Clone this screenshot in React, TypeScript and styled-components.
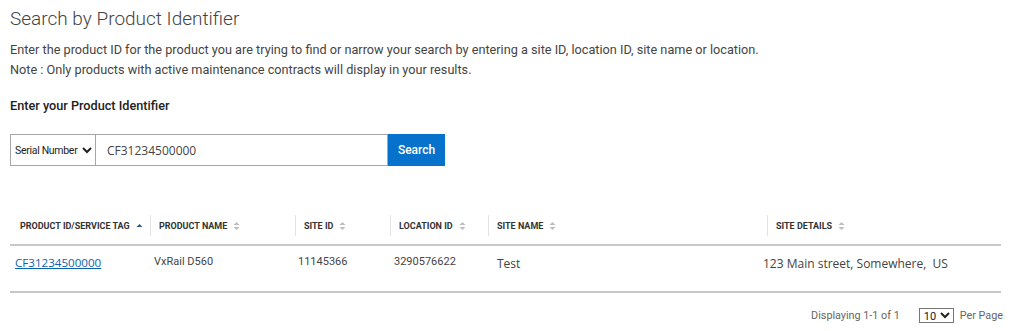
import styled, { createGlobalStyle } from "styled-components";

const GlobalStyle = createGlobalStyle`
  body {
    margin: 0;
    padding: 0;
    background: #ffffff;
    font-family: "Roboto", "Liberation Sans", sans-serif;
  }
`;

const Page = styled.div`
  padding: 6px 10px 0 10px;
  width: 1011px;
  box-sizing: border-box;
`;

const Title = styled.h1`
  margin: 0;
  font-size: 19px;
  font-weight: 300;
  line-height: 26px;
  color: #444444;
`;

const Intro = styled.p`
  margin: 8px 0 0 0;
  font-size: 12.7px;
  line-height: 20px;
  color: #444444;
`;

const Label = styled.h3`
  margin: 16px 0 0 0;
  font-size: 12.7px;
  font-weight: 500;
  line-height: 20px;
  color: #222222;
`;

const SearchBar = styled.div`
  display: flex;
  margin-top: 18px;
  height: 32px;
  width: 435px;
`;

const TypeSelect = styled.select`
  width: 85px;
  height: 32px;
  box-sizing: border-box;
  border: 1px solid #a6a6a6;
  border-right: none;
  font-family: "Roboto", sans-serif;
  font-size: 10.5px;
  letter-spacing: -0.3px;
  color: #222;
  padding: 0;
  background: #fff;
`;

const SearchInput = styled.input`
  flex: 1;
  height: 32px;
  box-sizing: border-box;
  border: 1px solid #a6a6a6;
  padding: 0 0 0 11px;
  font-family: "Open Sans", sans-serif;
  font-size: 12px;
  color: #444;
  outline: none;
`;

const SearchButton = styled.button`
  width: 57px;
  height: 32px;
  border: none;
  background: #0672cb;
  color: #ffffff;
  font-family: "Roboto", sans-serif;
  font-weight: 500;
  font-size: 12px;
  padding: 0;
`;

const Table = styled.div`
  margin-top: 42px;
  display: grid;
  grid-template-columns: 140px 145px 95px 98px 279px 1fr;
`;

const HeadCell = styled.div<{ $first?: boolean }>`
  display: flex;
  align-items: center;
  gap: 6px;
  height: 36px;
  padding-left: ${(p) => (p.$first ? "10px" : "9px")};
  font-size: 9px;
  font-weight: 700;
  color: #333333;
  text-transform: uppercase;
  border-bottom: 2px solid #c8c8c8;
  position: relative;
  ${(p) =>
    p.$first
      ? ""
      : `&::before {
    content: "";
    position: absolute;
    left: 0;
    top: 7px;
    bottom: 8px;
    width: 1px;
    background: #e2e2e2;
  }`}
`;

const BodyCell = styled.div<{ $indent: number; $font?: string; $size?: number }>`
  display: flex;
  align-items: flex-start;
  height: 47px;
  padding-top: 9px;
  box-sizing: border-box;
  padding-left: ${(p) => p.$indent}px;
  font-family: ${(p) => p.$font ?? '"Roboto", sans-serif'};
  font-size: ${(p) => p.$size ?? 11}px;
  color: #444444;
  border-bottom: 2px solid #c8c8c8;
`;

const IdLink = styled.a`
  color: #0b63b0;
  text-decoration: underline;
  font-family: "Open Sans", sans-serif;
  font-size: 11.6px;
`;

const Footer = styled.div`
  display: flex;
  justify-content: flex-end;
  align-items: center;
  margin: 15px -2px 0 0;
  font-size: 10.8px;
  color: #666666;
`;

const PageSize = styled.select`
  margin: 0 6px 0 19px;
  height: 15px;
  width: 35px;
  font-size: 11px;
  font-family: "Roboto", sans-serif;
  border: 1px solid #767676;
  padding: 0;
  background: #fff;
  color: #222;
`;

const SortIcon = ({ active }: { active?: boolean }) =>
  active ? (
    <svg width="7" height="8" viewBox="0 0 7 8">
      <path d="M0.5 5 L3.5 2 L6.5 5 Z" fill="#2b5a8f" />
    </svg>
  ) : (
    <svg width="7" height="10" viewBox="0 0 7 10">
      <path d="M0.5 4 L3.5 1 L6.5 4 Z" fill="#bdbdbd" />
      <path d="M0.5 6 L3.5 9 L6.5 6 Z" fill="#bdbdbd" />
    </svg>
  );

const columns = [
  "Product ID/Service Tag",
  "Product Name",
  "Site ID",
  "Location ID",
  "Site Name",
  "Site Details",
];

const App = () => {
  return (
    <>
      <GlobalStyle />
      <Page>
        <Title>Search by Product Identifier</Title>
        <Intro>
          Enter the product ID for the product you are trying to find or narrow your search by
          entering a site ID, location ID, site name or location.
          <br />
          Note : Only products with active maintenance contracts will display in your results.
        </Intro>
        <Label>Enter your Product Identifier</Label>
        <SearchBar>
          <TypeSelect defaultValue="serial">
            <option value="serial">Serial Number</option>
          </TypeSelect>
          <SearchInput defaultValue="CF31234500000" />
          <SearchButton>Search</SearchButton>
        </SearchBar>
        <Table>
          {columns.map((c, i) => (
            <HeadCell key={c} $first={i === 0}>
              {c}
              <SortIcon active={i === 0} />
            </HeadCell>
          ))}
          <BodyCell $indent={5}>
            <IdLink href="#">CF31234500000</IdLink>
          </BodyCell>
          <BodyCell $indent={4}>VxRail D560</BodyCell>
          <BodyCell $indent={3}>11145366</BodyCell>
          <BodyCell $indent={4}>3290576622</BodyCell>
          <BodyCell $indent={9} $font='"Open Sans", sans-serif' $size={12}>
            Test
          </BodyCell>
          <BodyCell
            $indent={0}
            $font='"Open Sans", sans-serif'
            $size={12}
            style={{ marginLeft: -4 }}
          >
            123 Main street, Somewhere,&nbsp; US
          </BodyCell>
        </Table>
        <Footer>
          Displaying 1-1 of 1
          <PageSize defaultValue="10">
            <option value="10">10</option>
          </PageSize>
          Per Page
        </Footer>
      </Page>
    </>
  );
};

export default App;
